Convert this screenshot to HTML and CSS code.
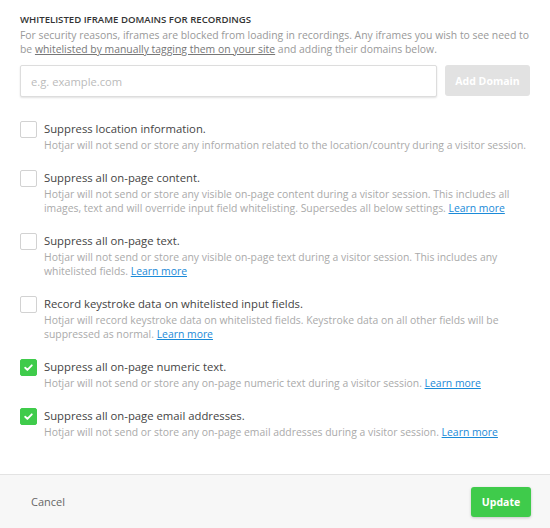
FILE: index.html
```html
<!DOCTYPE html>
<html lang="en">
<head>
  <meta charset="UTF-8" />
  <meta name="viewport" content="width=device-width, initial-scale=1" />
  <title>Recording Settings</title>
  <link rel="stylesheet" href="styles.css">
</head>
<body>

  <div class="modal">
    <div class="modal-body">
      <div class="section">
        <div class="section-title">Whitelisted iframe domains for recordings</div>
        <p class="section-desc">
          For security reasons, iframes are blocked from loading in recordings. Any iframes you wish to see need to
          be <a class="plain-link" href="#">whitelisted by manually tagging them on your site</a> and adding their domains below.
        </p>
        <div class="domain-form">
          <input class="domain-input" type="text" placeholder="e.g. example.com" />
          <button class="btn btn-disabled" disabled>Add Domain</button>
        </div>
      </div>

      <ul class="options">
        <li class="option">
          <span class="check"></span>
          <div class="option-text">
            <div class="option-title">Suppress location information.</div>
            <div class="option-desc">Hotjar will not send or store any information related to the location/country during a visitor session.</div>
          </div>
        </li>
        <li class="option">
          <span class="check"></span>
          <div class="option-text">
            <div class="option-title">Suppress all on-page content.</div>
            <div class="option-desc">Hotjar will not send or store any visible on-page content during a visitor session. This includes all images, text and will override input field whitelisting. Supersedes all below settings. <a href="#">Learn more</a></div>
          </div>
        </li>
        <li class="option">
          <span class="check"></span>
          <div class="option-text">
            <div class="option-title">Suppress all on-page text.</div>
            <div class="option-desc">Hotjar will not send or store any visible on-page text during a visitor session. This includes any whitelisted fields. <a href="#">Learn more</a></div>
          </div>
        </li>
        <li class="option">
          <span class="check"></span>
          <div class="option-text">
            <div class="option-title">Record keystroke data on whitelisted input fields.</div>
            <div class="option-desc">Hotjar will record keystroke data on whitelisted fields. Keystroke data on all other fields will be suppressed as normal. <a href="#">Learn more</a></div>
          </div>
        </li>
        <li class="option">
          <span class="check checked">
            <svg viewBox="0 0 16 16"><path d="M4.5 8.3l2.3 2.3 4.7-4.9"/></svg>
          </span>
          <div class="option-text">
            <div class="option-title">Suppress all on-page numeric text.</div>
            <div class="option-desc">Hotjar will not send or store any on-page numeric text during a visitor session. <a href="#">Learn more</a></div>
          </div>
        </li>
        <li class="option">
          <span class="check checked">
            <svg viewBox="0 0 16 16"><path d="M4.5 8.3l2.3 2.3 4.7-4.9"/></svg>
          </span>
          <div class="option-text">
            <div class="option-title">Suppress all on-page email addresses.</div>
            <div class="option-desc">Hotjar will not send or store any on-page email addresses during a visitor session. <a href="#">Learn more</a></div>
          </div>
        </li>
      </ul>
    </div>

    <div class="modal-footer">
      <a class="cancel" href="#">Cancel</a>
      <button class="btn btn-green">Update</button>
    </div>
  </div>

</body>
</html>
```

FILE: styles.css
```css
* {
  box-sizing: border-box;
}

body {
  margin: 0;
  background-color: #fff;
  color: #444;
  font-family: "Open Sans", Arial, sans-serif;
}

.modal {
  width: 550px;
  height: 528px;
  display: flex;
  flex-direction: column;
  overflow: hidden;
}

.modal-body {
  flex: 1;
  padding: 13px 20px 0;
}

.section-title {
  font-size: 9.6px;
  font-weight: 600;
  text-transform: uppercase;
  color: #333;
  line-height: 14px;
}

.section-desc {
  margin: 1px 0 0;
  font-size: 10.4px;
  line-height: 14px;
  color: #999;
}
.plain-link {
  color: #777;
  text-decoration: underline;
}

.domain-form {
  display: flex;
  gap: 8px;
  margin-top: 9px;
}
.domain-input {
  flex: 1;
  height: 32px;
  border: 1px solid #ddd;
  border-radius: 2px;
  padding: 0 10px;
  font-family: inherit;
  font-size: 11.2px;
  color: #444;
  box-shadow: 0 1px 2px rgba(0, 0, 0, 0.12);
}
.domain-input::placeholder {
  color: #bbb;
}

.btn {
  border: none;
  border-radius: 3px;
  font-family: inherit;
  font-size: 10.5px;
  font-weight: 700;
  color: #fff;
  padding: 0;
  cursor: pointer;
}
.btn-disabled {
  width: 85px;
  height: 31px;
  background-color: #e2e2e2;
  cursor: default;
}
.btn-green {
  width: 60px;
  height: 30px;
  background-color: #3fcb4b;
  box-shadow: 0 1px 3px rgba(0, 0, 0, 0.2);
}

.options {
  list-style: none;
  margin: 23px 0 0;
  padding: 0;
  display: flex;
  flex-direction: column;
  gap: 17px;
}
.option {
  display: flex;
  align-items: flex-start;
  gap: 7px;
}
.check {
  flex: none;
  width: 17px;
  height: 17px;
  margin-top: 1px;
  border: 1px solid #d2d2d2;
  border-radius: 2px;
  background-color: #fff;
}
.check.checked {
  border-color: #3fcb4b;
  background-color: #3fcb4b;
}
.check svg {
  display: block;
  width: 15px;
  height: 15px;
  fill: none;
  stroke: #fff;
  stroke-width: 2;
  stroke-linecap: round;
  stroke-linejoin: round;
}

.option-title {
  font-size: 11.3px;
  line-height: 18px;
  color: #444;
}
.option-desc {
  font-size: 10.4px;
  line-height: 14px;
  color: #aaa;
}
.option-desc a {
  color: #1a8ad8;
}

.modal-footer {
  flex: none;
  height: 54px;
  border-top: 1px solid #e3e3e3;
  background-color: #f7f7f7;
  display: flex;
  align-items: center;
  justify-content: space-between;
  padding: 0 19px 0 31px;
}
.cancel {
  font-size: 11px;
  color: #666;
  text-decoration: none;
}
```
